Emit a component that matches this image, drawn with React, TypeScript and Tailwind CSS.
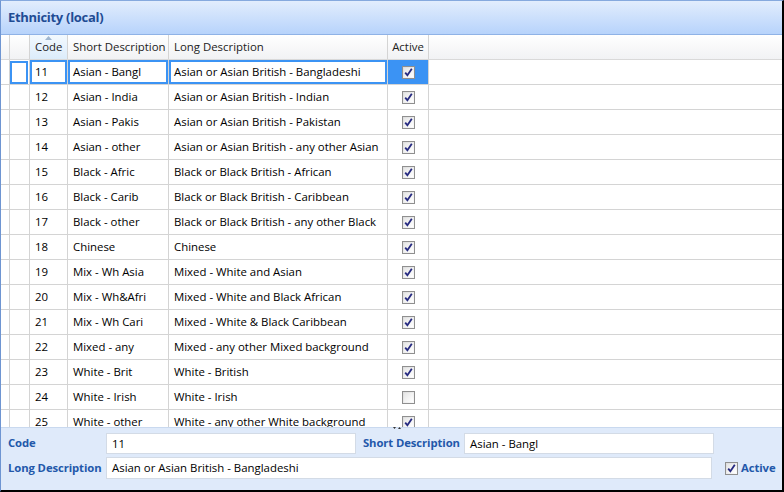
import React from "react";

type Row = [string, string, string, boolean];

const rows: Row[] = [
  ["11", "Asian - Bangl", "Asian or Asian British - Bangladeshi", true],
  ["12", "Asian - India", "Asian or Asian British - Indian", true],
  ["13", "Asian - Pakis", "Asian or Asian British - Pakistan", true],
  ["14", "Asian - other", "Asian or Asian British - any other Asian", true],
  ["15", "Black - Afric", "Black or Black British - African", true],
  ["16", "Black - Carib", "Black or Black British - Caribbean", true],
  ["17", "Black - other", "Black or Black British - any other Black", true],
  ["18", "Chinese", "Chinese", true],
  ["19", "Mix - Wh Asia", "Mixed - White and Asian", true],
  ["20", "Mix - Wh&Afri", "Mixed - White and Black African", true],
  ["21", "Mix - Wh Cari", "Mixed - White & Black Caribbean", true],
  ["22", "Mixed - any", "Mixed - any other Mixed background", true],
  ["23", "White - Brit", "White - British", true],
  ["24", "White - Irish", "White - Irish", false],
  ["25", "White - other", "White - any other White background", true],
];

const CheckBox = ({ checked }: { checked: boolean }) => (
  <div className="w-[13px] h-[13px] shrink-0 border border-[#8f8f8f] bg-gradient-to-br from-[#dcdcdc] to-[#fbfbfb] flex items-center justify-center">
    <div className="w-[9px] h-[9px] bg-gradient-to-br from-[#e6e6e6] to-white flex items-center justify-center">
      {checked && (
        <svg width="9" height="9" viewBox="0 0 9 9">
          <path d="M1.2 4.6 L3.4 7.2 L7.8 0.8" fill="none" stroke="#262a80" strokeWidth="1.8" />
        </svg>
      )}
    </div>
  </div>
);

const cell = "h-full shrink-0 border-r border-[#d4d4d4] flex items-center whitespace-nowrap overflow-hidden";
const label = "shrink-0 whitespace-nowrap font-bold text-[#2358aa] text-[11.3px] tracking-[-0.1px]";
const input = "shrink-0 bg-white border border-[#d3dbe6] flex items-center pl-[5px] whitespace-nowrap";

export default function App() {
  return (
    <div
      className="w-[784px] h-[492px] flex flex-col bg-white border-t border-l border-t-[#86a9de] border-l-[#6e95d2] border-r-2 border-b-2 border-r-black border-b-black overflow-hidden text-[11.4px] text-black"
      style={{ fontFamily: '"Open Sans", "Noto Sans", sans-serif' }}
    >
      <div className="h-[34px] shrink-0 bg-gradient-to-b from-[#e2edfd] to-[#b7d3fb] border-b border-[#8fb2e6] flex items-center pl-[7px]">
        <span className="text-[13px] font-bold text-[#1f4c94] tracking-[-0.3px]">Ethnicity (local)</span>
      </div>

      <div className="flex-1 relative overflow-hidden flex flex-col">
        <div className="h-[25px] shrink-0 flex border-b border-[#d9d9d9] bg-gradient-to-b from-white to-[#f1f2f4] text-[#222]">
          <div className="w-[9px] h-full shrink-0 border-r border-[#d4d4d4]" />
          <div className="w-[20px] h-full shrink-0 border-r border-[#d4d4d4]" />
          <div className={`${cell} w-[38px] pl-[5px] relative bg-gradient-to-b from-[#f3f9fe] to-[#dcecfb]`}>
            <svg className="absolute left-[15px] top-[1px]" width="7" height="4" viewBox="0 0 7 4">
              <path d="M0 4 L3.5 0 L7 4 Z" fill="#9fb6cf" />
            </svg>
            Code
          </div>
          <div className={`${cell} w-[101px] pl-[5px]`}>Short Description</div>
          <div className={`${cell} w-[219px] pl-[5px]`}>Long Description</div>
          <div className={`${cell} w-[41px] justify-center`}>Active</div>
          <div className="flex-1" />
        </div>

        {rows.map(([code, short, long, active], i) => {
          const sel = i === 0;
          const box = sel ? "border-2 border-[#3b93f4] pl-[3px]" : "pl-[5px]";
          return (
            <div key={code} className="h-[25px] shrink-0 flex border-b border-[#d4d4d4]">
              <div className="w-[9px] h-full shrink-0 border-r border-[#d4d4d4]" />
              <div className={`${cell} w-[20px]`}>
                {sel && <div className="w-[18px] h-[23px] border-2 border-[#3b93f4]" />}
              </div>
              <div className={`${cell} w-[38px]`}>
                <div className={`w-full h-full flex items-center ${box}`}>{code}</div>
              </div>
              <div className={`${cell} w-[101px]`}>
                <div className={`w-full h-full flex items-center ${box}`}>{short}</div>
              </div>
              <div className={`${cell} w-[219px]`}>
                <div className={`w-full h-full flex items-center ${box}`}>{long}</div>
              </div>
              <div className={`${cell} w-[41px] justify-center ${sel ? "bg-[#3b93f4]" : ""}`}>
                <CheckBox checked={active} />
              </div>
              <div className="flex-1" />
            </div>
          );
        })}
      </div>

      <div className="h-[63px] shrink-0 relative bg-[#dfeafa] border-t border-[#c9d9ef] flex flex-col gap-[3px] pt-[5px] pl-[7px]">
        <svg className="absolute left-[392px] -top-[2px]" width="9" height="5" viewBox="0 0 9 5">
          <path d="M0 1 L3 1 L1.5 3 Z M5 3 L8 3 L6.5 1 Z" fill="#333" />
        </svg>
        <div className="flex items-center h-[21px]">
          <span className={`${label} w-[98px]`}>Code</span>
          <div className={`${input} w-[250px] h-[21px]`}>11</div>
          <span className={`${label} ml-[7px] w-[101px]`}>Short Description</span>
          <div className={`${input} w-[250px] h-[21px]`}>Asian - Bangl</div>
        </div>
        <div className="flex items-center h-[22px]">
          <span className={`${label} w-[98px]`}>Long Description</span>
          <div className={`${input} w-[606px] h-[22px]`}>Asian or Asian British - Bangladeshi</div>
          <div className="ml-[13px] flex items-center gap-[3px]">
            <CheckBox checked />
            <span className={label}>Active</span>
          </div>
        </div>
      </div>
    </div>
  );
}
